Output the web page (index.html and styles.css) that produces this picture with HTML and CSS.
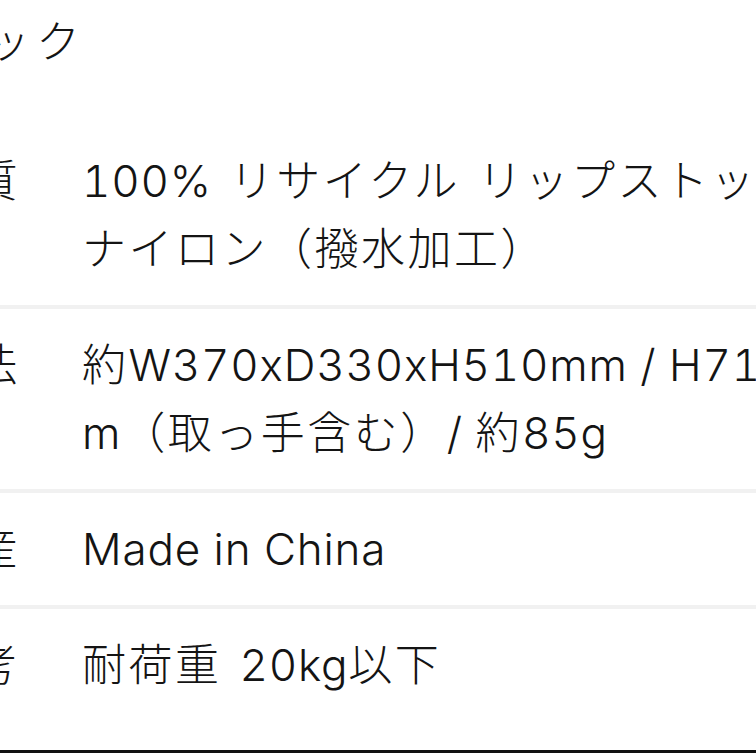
FILE: index.html
```html
<!DOCTYPE html>
<html lang="ja">
<head>
    <meta charset="UTF-8">
    <meta name="viewport" content="width=device-width, initial-scale=1.0">
    <title>スペック</title>
    <link rel="stylesheet" href="styles.css">
</head>
<body>
    <div class="spec">
        <h2 class="spec-title">スペック</h2>

        <div class="spec-table">
            <div class="spec-row">
                <div class="spec-label">材質</div>
                <div class="spec-value"><span class="en">100%</span> リサイクル リップストップ<br>ナイロン（撥水加工）</div>
            </div>
            <div class="spec-row">
                <div class="spec-label">寸法</div>
                <div class="spec-value">約<span class="en">W370xD330xH510mm / H710m</span><br><span class="en">m</span>（取っ手含む）<span class="en">/ </span>約<span class="en">85g</span></div>
            </div>
            <div class="spec-row">
                <div class="spec-label">生産</div>
                <div class="spec-value"><span class="en">Made in China</span></div>
            </div>
            <div class="spec-row spec-row-last">
                <div class="spec-label">備考</div>
                <div class="spec-value">耐荷重 <span class="en">20kg</span>以下</div>
            </div>
        </div>
    </div>
    <div class="screen-edge"></div>
</body>
</html>
```

FILE: styles.css
```css
* {
    margin: 0;
    padding: 0;
    box-sizing: border-box;
}

html, body {
    overflow: hidden;
}

body {
    font-family: Inter, 'Noto Sans CJK JP', sans-serif;
    font-weight: 300;
    background: #fff;
    color: #141414;
    width: 756px;
    height: 756px;
}

.spec {
    margin-left: -73px;
    width: 1000px;
}

.spec-title {
    font-size: 44px;
    font-weight: 300;
    line-height: 68px;
    letter-spacing: 6px;
    margin-left: -38px;
    padding-top: 8px;
    margin-bottom: 49px;
}

.spec-row {
    display: grid;
    grid-template-columns: 155px 1fr;
    font-size: 44px;
    line-height: 68px;
    letter-spacing: 2.5px;
    word-spacing: 3px;
    padding: 22px 0;
    border-bottom: 4px solid #f1f1f1;
}

.spec-row-last {
    border-bottom: none;
    padding-bottom: 51px;
}

.spec-value {
    white-space: nowrap;
}

.en {
    letter-spacing: 0.8px;
    word-spacing: 0;
    font-variant-numeric: tabular-nums;
}

.screen-edge {
    height: 3px;
    background: #111;
}
```
